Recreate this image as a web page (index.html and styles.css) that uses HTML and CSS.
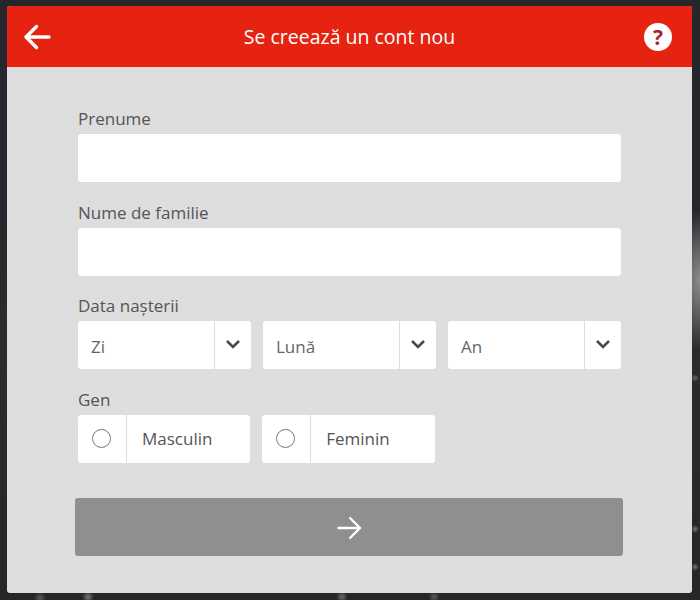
FILE: index.html
```html
<!DOCTYPE html>
<html lang="ro">
  <head>
    <meta charset="UTF-8" />
    <title>Se creează un cont nou</title>
    <link rel="stylesheet" href="styles.css">
  </head>
  <body>
    <div class="panel">
      <div class="header">
        <svg class="back-icon" viewBox="0 0 28 28" width="28" height="28">
          <path d="M26 14H3M13.500 3.500L3 14l10.500 10.500" fill="none" stroke="#fff" stroke-width="3.400" stroke-linecap="round" stroke-linejoin="round" />
        </svg>
        <h1>Se creează un cont nou</h1>
        <div class="help-icon">?</div>
      </div>

      <form class="form">
        <label class="field-label">Prenume</label>
        <input class="text-input" type="text">

        <label class="field-label">Nume de familie</label>
        <input class="text-input" type="text">

        <label class="field-label">Data nașterii</label>
        <div class="select-row">
          <div class="select-box">
            <span class="select-value">Zi</span>
            <span class="select-arrow">
              <svg viewBox="0 0 16 10" width="16" height="10"><path d="M2 2l6 6 6-6" fill="none" stroke="#4a4a4a" stroke-width="2.600" /></svg>
            </span>
          </div>
          <div class="select-box">
            <span class="select-value">Lună</span>
            <span class="select-arrow">
              <svg viewBox="0 0 16 10" width="16" height="10"><path d="M2 2l6 6 6-6" fill="none" stroke="#4a4a4a" stroke-width="2.600" /></svg>
            </span>
          </div>
          <div class="select-box">
            <span class="select-value">An</span>
            <span class="select-arrow">
              <svg viewBox="0 0 16 10" width="16" height="10"><path d="M2 2l6 6 6-6" fill="none" stroke="#4a4a4a" stroke-width="2.600" /></svg>
            </span>
          </div>
        </div>

        <label class="field-label">Gen</label>
        <div class="radio-row">
          <div class="radio-box">
            <span class="radio-cell"><span class="radio-circle"></span></span>
            <span class="radio-text">Masculin</span>
          </div>
          <div class="radio-box">
            <span class="radio-cell"><span class="radio-circle"></span></span>
            <span class="radio-text">Feminin</span>
          </div>
        </div>

        <button class="next-button" type="button">
          <svg viewBox="0 0 26 26" width="26" height="26">
            <path d="M1.500 13H24M13.500 2.500L24 13 13.500 23.500" fill="none" stroke="#fff" stroke-width="2.400" />
          </svg>
        </button>
      </form>
    </div>
  </body>
</html>
```

FILE: styles.css
```css
* {
  box-sizing: border-box;
  margin: 0;
  padding: 0;
}

html,
body {
  height: 600px;
  overflow: hidden;
}

body {
  font-family: 'Open Sans', 'Noto Sans', sans-serif;
  background-color: #25272c;
  /* blurred photo behind the dialog, only its edges show */
  background-image:
    radial-gradient(circle at 40px 598px, #5a5a5c 0, transparent 6px),
    radial-gradient(circle at 88px 597px, #77777a 0, transparent 6px),
    radial-gradient(circle at 342px 597px, #6a6a6c 0, transparent 6px),
    radial-gradient(circle at 434px 597px, #5a5a5c 0, transparent 6px),
    radial-gradient(circle at 695px 378px, #6a6a6c 0, transparent 4px),
    radial-gradient(circle at 695px 529px, #77777a 0, transparent 4px),
    radial-gradient(circle at 695px 567px, #77777a 0, transparent 4px),
    radial-gradient(ellipse 30px 70px at 700px 280px, #8e8e8e 0, transparent 100%),
    linear-gradient(180deg, #25272c 0, #25272c 200px, #2c2c2e 340px, #262626 100%);
  padding: 6px 8px 7px 7px;
}

.panel {
  height: 587px;
  background: linear-gradient(180deg, #dddddd 0, #dedee0 100%);
  border-radius: 3px;
  overflow: hidden;
}

.header {
  height: 61px;
  background: #e52310;
  display: flex;
  align-items: center;
  justify-content: space-between;
  padding: 0 20px 0 16px;
}

.header h1 {
  font-size: 19.500px;
  font-weight: 400;
  color: #ffffff;
  margin-left: 4px;
}

.help-icon {
  width: 28px;
  height: 28px;
  border-radius: 50%;
  background: #ffffff;
  color: #a3262a;
  font-size: 21px;
  font-weight: 700;
  line-height: 28px;
  text-align: center;
}

.form {
  display: flex;
  flex-direction: column;
  padding: 40px 71px 0;
}

.field-label {
  font-size: 17px;
  line-height: 22px;
  height: 27px;
  padding-top: 1px;
  color: #555555;
}

.text-input {
  height: 48px;
  background: #ffffff;
  border: none;
  border-radius: 3px;
  margin-bottom: 18.670px;
}

.select-row {
  display: flex;
  gap: 12px;
  margin-bottom: 18.670px;
}

.select-box {
  flex: 1;
  height: 48px;
  background: #ffffff;
  border-radius: 3px;
  display: flex;
  align-items: center;
}

.select-value {
  flex: 1;
  padding: 2px 0 0 13px;
  font-size: 17px;
  color: #666666;
}

.select-arrow {
  width: 37px;
  height: 48px;
  border-left: 1px solid #dddddd;
  display: flex;
  align-items: center;
  justify-content: center;
  padding-bottom: 3px;
}

.radio-row {
  display: flex;
  gap: 12px;
  padding-right: 186.500px;
}

.radio-box {
  flex: 1;
  height: 48px;
  background: #ffffff;
  border-radius: 3px;
  display: flex;
  align-items: center;
}

.radio-cell {
  width: 49px;
  height: 48px;
  padding-right: 1px;
  border-right: 1px solid #dddddd;
  display: flex;
  align-items: center;
  justify-content: center;
}

.radio-circle {
  width: 19px;
  height: 19px;
  border: 1px solid #777777;
  border-radius: 50%;
}

.radio-text {
  padding-left: 15px;
  font-size: 17px;
  color: #555555;
}

.next-button {
  height: 58px;
  margin: 35px -2px 0 -3px;
  padding-top: 3px;
  background: #8e8f90;
  border: none;
  border-radius: 3px;
  display: flex;
  align-items: center;
  justify-content: center;
}
```
